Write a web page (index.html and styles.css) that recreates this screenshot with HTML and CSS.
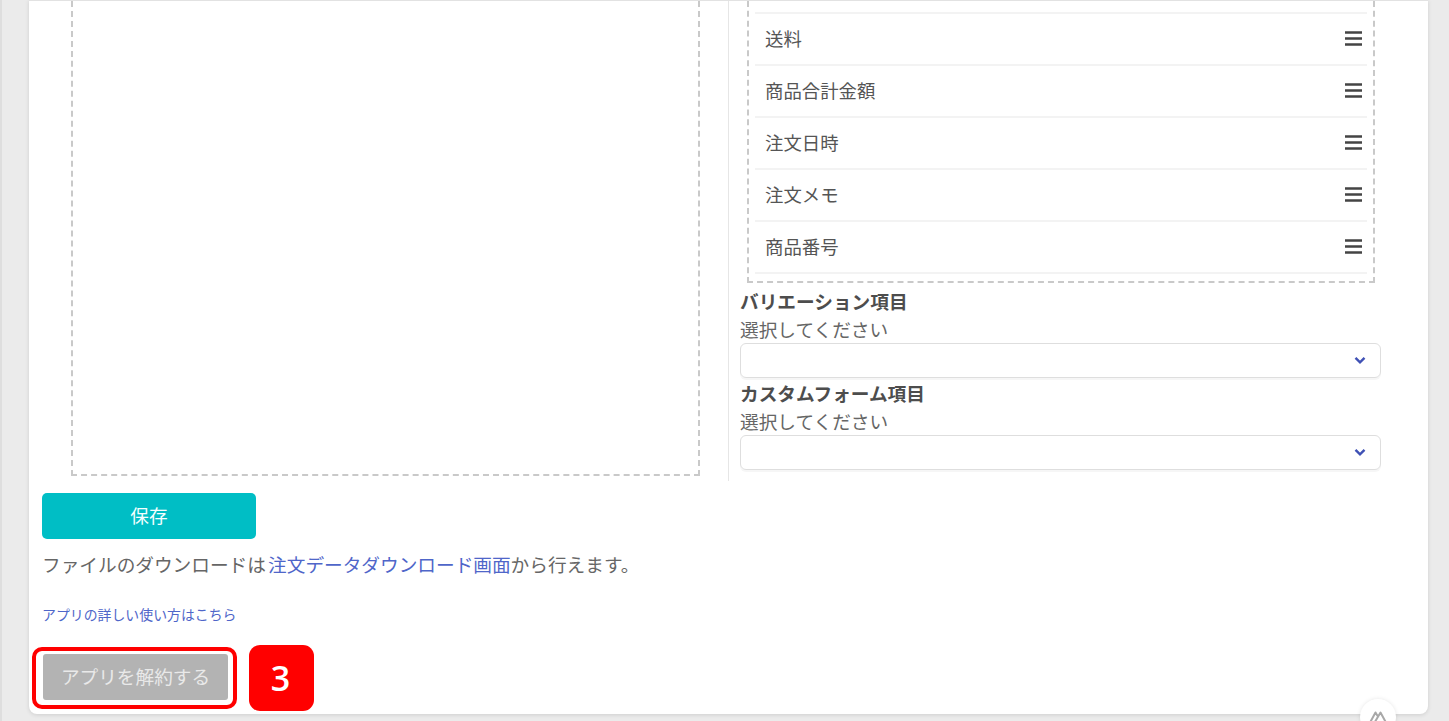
FILE: index.html
```html
<!DOCTYPE html>
<html lang="ja">
<head>
<meta charset="utf-8">
<title>アプリ設定</title>
<link rel="stylesheet" href="styles.css">
</head>
<body>
<main class="card">
  <div class="columns">
    <section class="col-left"><div class="drop-left"></div></section>
    <section class="col-right">
      <div class="drop-right">
        <ul class="items">
          <li class="item"><span>送料</span><svg class="bars" viewBox="0 0 17 15"><path d="M0 1.5h17M0 7.5h17M0 13.5h17"/></svg></li>
          <li class="item"><span>商品合計金額</span><svg class="bars" viewBox="0 0 17 15"><path d="M0 1.5h17M0 7.5h17M0 13.5h17"/></svg></li>
          <li class="item"><span>注文日時</span><svg class="bars" viewBox="0 0 17 15"><path d="M0 1.5h17M0 7.5h17M0 13.5h17"/></svg></li>
          <li class="item"><span>注文メモ</span><svg class="bars" viewBox="0 0 17 15"><path d="M0 1.5h17M0 7.5h17M0 13.5h17"/></svg></li>
          <li class="item"><span>商品番号</span><svg class="bars" viewBox="0 0 17 15"><path d="M0 1.5h17M0 7.5h17M0 13.5h17"/></svg></li>
        </ul>
      </div>
      <div class="field field-first">
        <h3 class="field-title">バリエーション項目</h3>
        <p class="field-hint">選択してください</p>
        <div class="select"><svg class="chev" viewBox="0 0 12 9"><path d="M1.5 1.8 6 6.3l4.5-4.5"/></svg></div>
      </div>
      <div class="field field-second">
        <h3 class="field-title">カスタムフォーム項目</h3>
        <p class="field-hint">選択してください</p>
        <div class="select"><svg class="chev" viewBox="0 0 12 9"><path d="M1.5 1.8 6 6.3l4.5-4.5"/></svg></div>
      </div>
    </section>
  </div>
  <button class="btn-save" type="button">保存</button>
  <p class="note">ファイルのダウンロードは <a href="#">注文データダウンロード画面</a>から行えます。</p>
  <p class="help"><a href="#">アプリの詳しい使い方はこちら</a></p>
  <div class="cancel-wrap">
    <button class="btn-cancel" type="button">アプリを解約する</button>
    <span class="frame"></span>
    <span class="badge">3</span>
  </div>
</main>
<div class="float-btn">
  <svg class="logo" viewBox="0 0 20 16"><path d="M1.5 14.5 7.5 3.5l3 5M6 14.5l6.5-11 6 11H6.2M1.5 14.5H6"/></svg>
</div>
</body>
</html>
```
FILE: styles.css
```css
* { box-sizing: border-box; }
html, body { margin: 0; height: 721px; overflow: hidden; }
body {
  position: relative;
  background: #ebebeb;
  border-left: 2px solid #dedede;
  font-family: "Noto Sans CJK JP", "Noto Sans", sans-serif;
  color: #555;
}
.card {
  position: relative;
  width: 1399px;
  height: 714px;
  margin-left: 27px;
  background: #fff;
  border-top: 1px solid #e2e2e2;
  border-radius: 0 0 8px 8px;
  box-shadow: 0 1px 4px rgba(0, 0, 0, .12);
}
.columns { display: flex; height: 480px; margin-left: 42px; }
.col-left { width: 658px; border-right: 1px solid #e6e6e6; }
.drop-left {
  width: 629px;
  height: 475px;
  border: dashed #c9c9c9;
  border-width: 0 2px 2px 2px;
}
.col-right { margin-left: 11px; width: 641px; }
.drop-right {
  width: 628px;
  height: 282px;
  margin-left: 7px;
  padding: 11px 6px 0 6px;
  border: dashed #c9c9c9;
  border-width: 0 2px 2px 2px;
}
.items { list-style: none; margin: 0; padding: 0; border-top: 2px solid #f3f3f3; }
.item {
  display: flex;
  align-items: center;
  justify-content: space-between;
  height: 52px;
  padding: 0 5px 1px 10px;
  border-bottom: 2px solid #f3f3f3;
  font-size: 18.4px;
  line-height: 1;
}
.bars { width: 17px; height: 15px; }
.bars path { fill: none; stroke: #444; stroke-width: 2.6; }
.field-first { margin-top: 6px; }
.field-second { margin-top: 3px; }
.field-title { margin: 0; font-size: 18.66px; line-height: 24px; font-weight: 700; color: #4d4d4d; }
.field-hint { margin: 4px 0 0; font-size: 18.66px; line-height: 24px; color: #666; }
.select {
  display: flex;
  align-items: center;
  justify-content: flex-end;
  height: 35px;
  margin-top: 2px;
  padding-right: 14px;
  border: 1px solid #dedede;
  border-radius: 6px;
  box-shadow: 0 2px 0 #f6f6f6;
}
.chev { width: 12px; height: 9px; }
.chev path { fill: none; stroke: #3f51b5; stroke-width: 2.4; }
.btn-save {
  display: block;
  width: 214px;
  height: 46px;
  margin: 12px 0 0 13px;
  padding: 0 0 2px;
  border: 0;
  border-radius: 5px;
  background: #00bec5;
  color: #f4ffff;
  font: 18.66px/1 "Noto Sans CJK JP", sans-serif;
}
.note { margin: 11px 0 0 13px; font-size: 18.66px; line-height: 27px; color: #666; word-spacing: -2px; white-space: pre-wrap; }
a { color: #4f66c9; text-decoration: none; }
.help { margin: 27px 0 0 13px; font-size: 13.9px; line-height: 20px; }
.cancel-wrap { position: relative; margin: 30px 0 0 14px; width: 185px; height: 46px; }
.btn-cancel {
  display: block;
  width: 185px;
  height: 46px;
  padding: 0 0 2px;
  border: 0;
  border-radius: 3px;
  background: #b3b3b3;
  color: #e9e9e9;
  font: 18.66px/1 "Noto Sans CJK JP", sans-serif;
}
.frame {
  position: absolute;
  left: -11px;
  top: -7px;
  width: 205px;
  height: 62px;
  border: 4px solid #f00;
  border-radius: 10px;
}
.badge {
  position: absolute;
  left: 206px;
  top: -9px;
  width: 65px;
  height: 66px;
  display: flex;
  align-items: center;
  justify-content: center;
  padding-right: 2px;
  border-radius: 11px;
  background: #f00;
  color: #fff;
  font: 600 34px/1 "Open Sans", sans-serif;
}
.float-btn {
  position: absolute;
  left: 1358px;
  top: 699px;
  width: 36px;
  height: 36px;
  display: flex;
  justify-content: center;
  padding-top: 10px;
  border-radius: 50%;
  background: #fff;
  box-shadow: 0 0 4px rgba(0, 0, 0, .1);
}
.logo { width: 20px; height: 16px; }
.logo path { fill: none; stroke: #a8a8a8; stroke-width: 2; stroke-linejoin: round; }
```
